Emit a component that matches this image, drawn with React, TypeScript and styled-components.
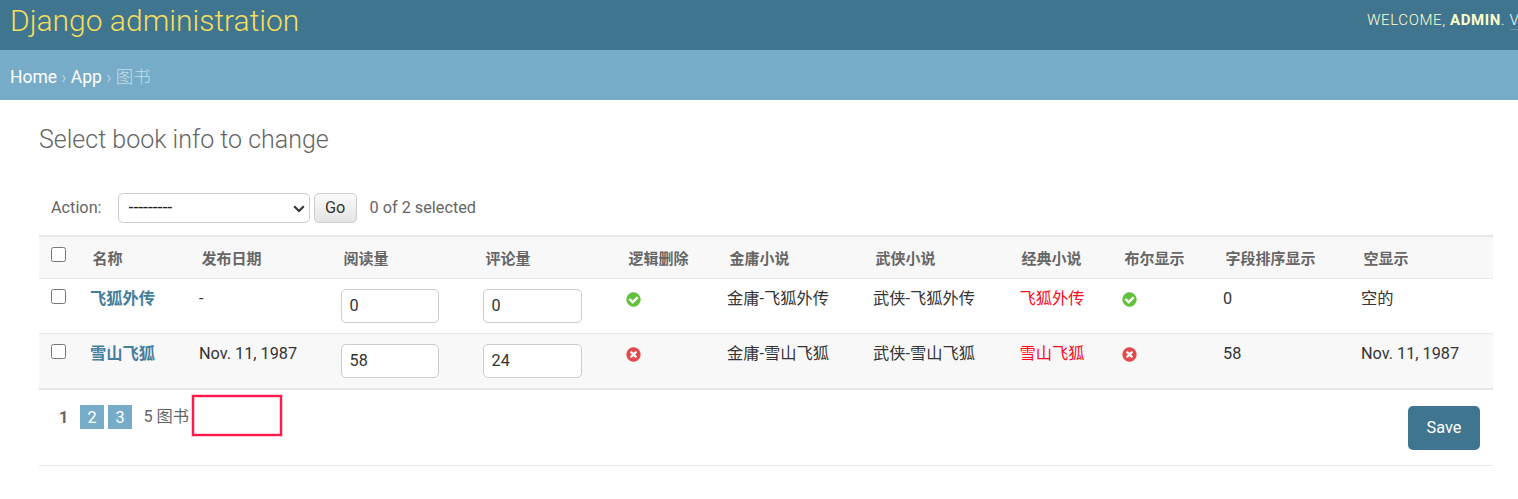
import React from "react";
import styled, { createGlobalStyle, css } from "styled-components";

const GlobalStyle = createGlobalStyle`
  * { box-sizing: border-box; }
  html, body { margin: 0; padding: 0; overflow: hidden; }
  body {
    background: #fff;
    color: #333;
    font-family: Roboto, "Noto Sans CJK SC", sans-serif;
    font-size: 16.25px;
    font-weight: 400;
  }
`;

const Page = styled.div`
  width: 100%;
  height: 499px;
  overflow: hidden;
`;

const Header = styled.header`
  display: flex;
  justify-content: space-between;
  height: 50px;
  padding-left: 10px;
  background: #3f758f;
  color: #ffc;
  overflow: hidden;
`;

const SiteName = styled.h1`
  margin: 0;
  padding-top: 3px;
  font-size: 30px;
  line-height: 36px;
  font-weight: 300;
  color: #f5dd5d;
`;

const UserTools = styled.div`
  flex: none;
  width: 151px;
  padding-top: 11px;
  font-size: 15px;
  line-height: 19px;
  font-weight: 300;
  letter-spacing: 0.625px;
  text-transform: uppercase;
  white-space: nowrap;
  overflow: hidden;

  strong { font-weight: 700; }
`;

const UserLink = styled.a`
  color: #fff;
  border-bottom: 1px solid rgba(255, 255, 255, 0.25);
`;

const Breadcrumbs = styled.nav`
  height: 50px;
  padding: 15px 10px 0;
  background: #76acc7;
  color: #c4dce8;
  font-size: 17.5px;
  line-height: 24px;
  font-weight: 300;

  a { color: #fff; font-weight: 400; }
`;

const Content = styled.main`
  padding: 25px 25px 0 39px;
`;

const Title = styled.h2`
  margin: 0;
  font-size: 25px;
  line-height: 29px;
  font-weight: 300;
  color: #666;
`;

const Actions = styled.div`
  display: flex;
  align-items: center;
  height: 30px;
  margin: 39px 0 12px;
  padding-left: 12px;
  color: #666;
  line-height: 19px;
`;

const ActionText = styled.span`
  padding-bottom: 2px;
`;

const SelectBox = styled.div`
  display: grid;
  align-items: center;
  width: 192px;
  height: 30px;
  margin: 0 4px 0 16px;

  > * { grid-area: 1 / 1; }
  > svg { justify-self: end; margin: 2px 5px 0 0; pointer-events: none; }
`;

const ActionSelect = styled.select`
  appearance: none;
  width: 100%;
  height: 30px;
  padding: 0 10px 1px;
  border: 1px solid #ccc;
  border-radius: 5px;
  background: #fff;
  color: #222;
  font: inherit;
  font-size: 17.5px;
`;

const GoButton = styled.button`
  width: 43px;
  height: 30px;
  margin-right: 13px;
  padding: 0 0 2px;
  border: 1px solid #ccc;
  border-radius: 5px;
  background: linear-gradient(#fbfbfb, #e4e4e4);
  color: #333;
  font: inherit;
`;

const Table = styled.div`
  border-top: 2px solid #e8e8e8;
  border-bottom: 2px solid #e8e8e8;
`;

const Row = styled.div<{ $kind?: "head" | "odd" | "even" }>`
  display: grid;
  grid-template-columns: 41px 109px 142px 142px 143px 101px 146px 146px 103px 101px 138px 1fr;
  height: 54px;
  background: ${(p) => (p.$kind === "odd" ? "#fff" : "#f8f8f8")};
  ${(p) => p.$kind !== "even" && css`height: 55px; border-bottom: 1px solid #e8e8e8;`}
  ${(p) => p.$kind === "head" && css`height: 42px;`}
`;

const HeadCell = styled.div`
  padding: 11px 0 0 12.4px;
  color: #666;
  font-size: 15px;
  line-height: 22px;
  font-weight: 700;
  white-space: nowrap;
`;

const Cell = styled.div<{ $tone?: "link" | "red" }>`
  padding: 8px 0 0 ${(p) => (p.$tone === "red" ? 10.6 : 10)}px;
  line-height: 24px;
  white-space: nowrap;
  color: ${(p) => (p.$tone === "link" ? "#447e9b" : p.$tone === "red" ? "#ff0a1c" : "#333")};
  font-weight: ${(p) => (p.$tone === "link" ? 700 : 400)};
`;

const ControlCell = styled.div`
  padding: 10px 0 0 12px;
`;

const Check = styled.input`
  display: block;
  width: 15px;
  height: 15px;
  margin: 0;
`;

const NumberCell = styled.div`
  padding: 10px 0 0 10px;
`;

const NumberInput = styled.input<{ $width: number }>`
  display: block;
  width: ${(p) => p.$width}px;
  height: 34px;
  padding: 0 7.5px 1px;
  border: 1px solid #ccc;
  border-radius: 5px;
  background: #fff;
  color: #333;
  font: inherit;
`;

const IconCell = styled.div<{ $left: number }>`
  padding: 13px 0 0 ${(p) => p.$left}px;

  svg { display: block; }
`;

const Footer = styled.footer`
  display: flex;
  height: 76px;
  padding: 15px 13px 0 20px;
  border-bottom: 1px solid #e8e8e8;
  color: #666;
`;

const CurrentPage = styled.span`
  width: 21px;
  line-height: 25px;
  font-weight: 700;
`;

const PageLink = styled.a`
  width: 24px;
  height: 24px;
  margin-right: 4px;
  background: #76acc7;
  color: #fff;
  line-height: 25px;
  text-align: center;
`;

const Count = styled.span`
  width: 48.6px;
  margin-left: 7.4px;
  line-height: 24px;
  white-space: nowrap;
`;

const Highlight = styled.div`
  width: 90px;
  height: 41px;
  margin-top: -10px;
  border: 2px solid #ff1a4b;
  box-shadow: 0 0 0 1px rgba(255, 26, 75, 0.22), inset 0 0 0 1px rgba(255, 26, 75, 0.22);
`;

const SaveButton = styled.button`
  width: 72px;
  height: 44px;
  margin: 1px 0 0 auto;
  padding: 0 0 2px;
  border: 0;
  border-radius: 5px;
  background: #3f758f;
  color: #fff;
  font: inherit;
`;

const BoolIcon = ({ value }: { value: boolean }) => (
  <svg width="15" height="15" viewBox="90 90 1612 1612" aria-hidden="true">
    {value ? (
      <path
        fill="#61c13a"
        d="M1412 734q0-28-18-46l-91-90q-19-19-45-19t-45 19l-408 407-226-226q-19-19-45-19t-45 19l-91 90q-18 18-18 46 0 27 18 45l362 362q19 19 45 19 27 0 46-19l543-543q18-18 18-45zm252 162q0 209-103 385.500t-279.500 279.500-385.500 103-385.500-103-279.500-279.500-103-385.500 103-385.500 279.500-279.500 385.500-103 385.500 103 279.500 279.500 103 385.500z"
      />
    ) : (
      <path
        fill="#e2484d"
        d="M1277 1122q0-26-19-45l-181-181 181-181q19-19 19-45 0-27-19-46l-90-90q-19-19-46-19-26 0-45 19l-181 181-181-181q-19-19-45-19-27 0-46 19l-90 90q-19 19-19 46 0 26 19 45l181 181-181 181q-19 19-19 45 0 27 19 46l90 90q19 19 46 19 26 0 45-19l181-181 181 181q19 19 45 19 27 0 46-19l90-90q19-19 19-46zm387-226q0 209-103 385.500t-279.500 279.500-385.500 103-385.500-103-279.500-279.500-103-385.500 103-385.500 279.500-279.500 385.500-103 385.500 103 279.500 279.500 103 385.500z"
      />
    )}
  </svg>
);

const headings = [
  "名称", "发布日期", "阅读量", "评论量", "逻辑删除", "金庸小说",
  "武侠小说", "经典小说", "布尔显示", "字段排序显示", "空显示",
];

const books = [
  { name: "飞狐外传", date: "-", reads: 0, comments: 0, flag: true, blank: "空的" },
  { name: "雪山飞狐", date: "Nov. 11, 1987", reads: 58, comments: 24, flag: false, blank: "Nov. 11, 1987" },
];

export default function App() {
  return (
    <Page>
      <GlobalStyle />
      <Header>
        <SiteName>Django administration</SiteName>
        <UserTools>
          Welcome, <strong>admin</strong>. <UserLink>V</UserLink>
        </UserTools>
      </Header>
      <Breadcrumbs>
        <a>Home</a> › <a>App</a> › 图书
      </Breadcrumbs>
      <Content>
        <Title>Select book info to change</Title>
        <Actions>
          <ActionText>Action:</ActionText>
          <SelectBox>
            <ActionSelect>
              <option>---------</option>
            </ActionSelect>
            <svg width="12" height="8" viewBox="0 0 12 8" aria-hidden="true">
              <path d="M1.2 1.3 6 6.1l4.800-4.800" fill="none" stroke="#333" strokeWidth="2.1" />
            </svg>
          </SelectBox>
          <GoButton>Go</GoButton>
          <ActionText>0 of 2 selected</ActionText>
        </Actions>
        <Table>
          <Row $kind="head">
            <ControlCell><Check type="checkbox" /></ControlCell>
            {headings.map((h) => <HeadCell key={h}>{h}</HeadCell>)}
          </Row>
          {books.map((b, i) => (
            <Row key={b.name} $kind={i % 2 ? "even" : "odd"}>
              <ControlCell><Check type="checkbox" /></ControlCell>
              <Cell $tone="link">{b.name}</Cell>
              <Cell>{b.date}</Cell>
              <NumberCell><NumberInput $width={98} defaultValue={b.reads} /></NumberCell>
              <NumberCell><NumberInput $width={99} defaultValue={b.comments} /></NumberCell>
              <IconCell $left={9.5}><BoolIcon value={b.flag} /></IconCell>
              <Cell>金庸-{b.name}</Cell>
              <Cell>武侠-{b.name}</Cell>
              <Cell $tone="red">{b.name}</Cell>
              <IconCell $left={10}><BoolIcon value={b.flag} /></IconCell>
              <Cell>{b.reads}</Cell>
              <Cell>{b.blank}</Cell>
            </Row>
          ))}
        </Table>
        <Footer>
          <CurrentPage>1</CurrentPage>
          <PageLink>2</PageLink>
          <PageLink>3</PageLink>
          <Count>5 图书</Count>
          <Highlight />
          <SaveButton>Save</SaveButton>
        </Footer>
      </Content>
    </Page>
  );
}
